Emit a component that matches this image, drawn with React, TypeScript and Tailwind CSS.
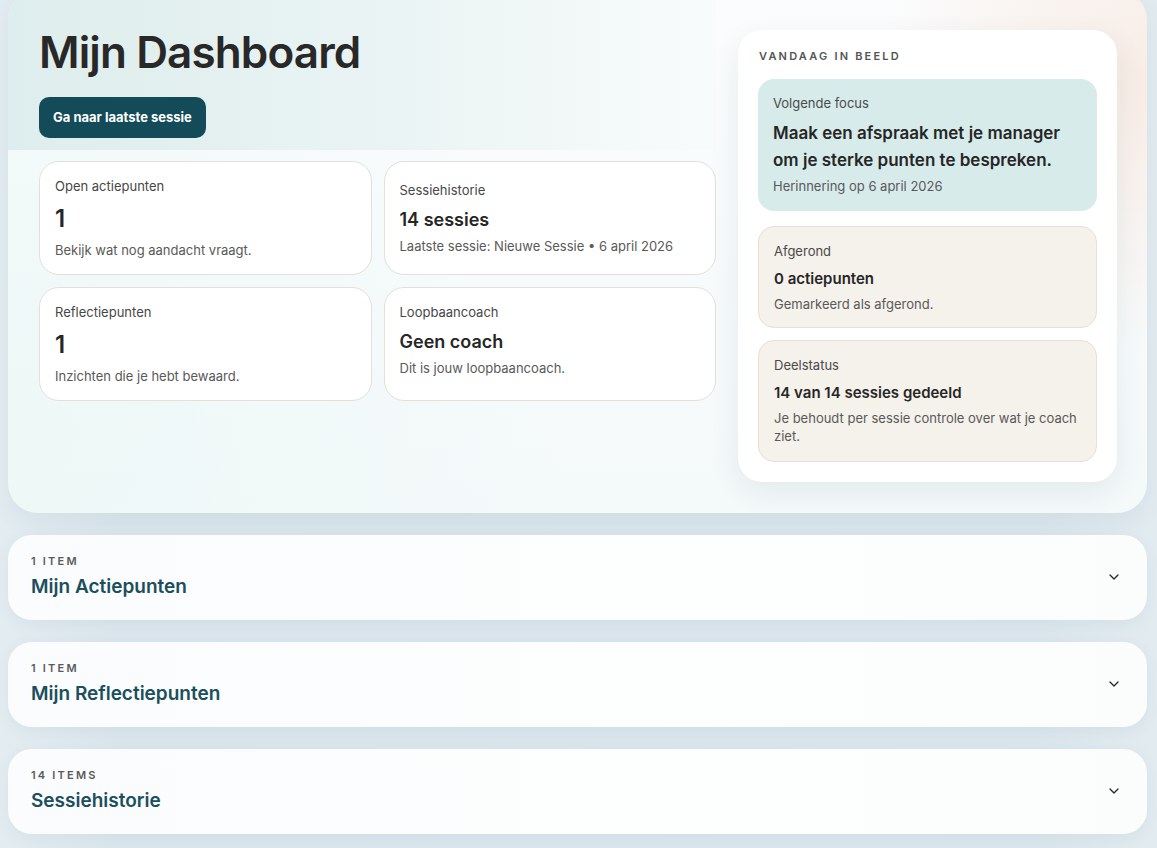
import { ChevronDown } from 'lucide-react'

// Stat tile in the hero grid
function StatCard({
  label,
  value,
  note,
  big,
  offset
}: {
  label: string
  value: string
  note: string
  big?: boolean
  offset?: boolean
}) {
  return (
    <div
      className={`flex flex-col rounded-[20px] border border-[#e4e0d9] bg-white px-[15px] pb-[14px] ${
        offset ? 'pt-[18px]' : 'pt-[14px]'
      }`}
    >
      <div className="text-[13px] leading-5 text-[#474747]">{label}</div>
      {big ? (
        <div className="mt-[7px] text-[24px] font-semibold leading-8 text-[#262626]">{value}</div>
      ) : (
        <div className="mt-[8px] text-[18px] font-semibold leading-6 text-[#262626]">{value}</div>
      )}
      <div className={`${big ? 'mt-[5px]' : 'mt-[4px]'} text-[13px] leading-5 text-[#595959]`}>{note}</div>
    </div>
  )
}

function SideCard({ label, value, note, className = '' }: { label: string; value: string; note: string; className?: string }) {
  return (
    <div className={`rounded-[16px] border border-[#e8e0d4] bg-[#f5f1eb] px-[15px] pt-[14px] ${className}`}>
      <div className="text-[13px] leading-5 text-[#4a4a4a]">{label}</div>
      <div className="mt-[7px] text-[15px] font-semibold leading-[22px] text-[#262626]">{value}</div>
      <div className="mt-[5px] text-[13px] leading-[18px] text-[#595959]">{note}</div>
    </div>
  )
}

function Section({ count, title }: { count: string; title: string }) {
  return (
    <div className="flex items-center rounded-[24px] bg-[linear-gradient(90deg,#fafcfd,#fdfefe_60%,#fbfdfd)] pl-[23px] pr-[25px] pt-[18px] pb-[20px] shadow-[0_4px_16px_rgba(40,80,100,0.05)]">
      <div className="flex-1">
        <div className="text-[11px] font-semibold uppercase leading-4 tracking-[0.2em] text-[#5a5a5a]">{count}</div>
        <div className="mt-[5px] text-[19px] font-semibold leading-[26px] text-[#1c4f5c]">{title}</div>
      </div>
      <ChevronDown size={16} strokeWidth={2} className="text-[#2a2a2a]" />
    </div>
  )
}

export default function App() {
  return (
    <div
      className="min-h-screen overflow-hidden bg-[linear-gradient(90deg,#e3ecf1,#dae6ec_10%,#dae6ec_90%,#e2ebf0)] pl-2 pr-[10px] pb-6"
      style={{ fontFamily: 'Inter, "Noto Sans", sans-serif' }}
    >
      {/* Hero */}
      <div className="-mt-[10px] grid grid-cols-[1fr_379px] gap-[22px] overflow-hidden rounded-[30px] bg-[radial-gradient(circle_at_100%_18%,#f8ece5_0,transparent_22%),radial-gradient(circle_at_0%_85%,#edf8f7_0,transparent_45%),linear-gradient(180deg,#fbfcfd,#f4f9fa)] pr-[30px] pb-[31px] shadow-[0_8px_24px_rgba(40,80,100,0.06)]">
        <div className="flex flex-col">
          <div className="bg-[linear-gradient(90deg,#deeded,#e9f3f3_50%,#f8fbfb)] pl-[31px] pt-[38px] pb-[12px]">
            <h1 className="text-[44px] font-semibold leading-[1.1] tracking-[-0.02em] text-[#282828]">Mijn Dashboard</h1>
            <button className="mt-[21px] inline-flex h-[41px] items-center rounded-[10px] bg-[#134b59] px-[14px] text-[13px] font-bold text-white">
              Ga naar laatste sessie
            </button>
          </div>
          <div className="grid grid-cols-2 gap-3 pl-[31px] pt-[11px]">
            <StatCard label="Open actiepunten" value="1" note="Bekijk wat nog aandacht vraagt." big />
            <StatCard label="Sessiehistorie" value="14 sessies" note="Laatste sessie: Nieuwe Sessie • 6 april 2026" offset />
            <StatCard label="Reflectiepunten" value="1" note="Inzichten die je hebt bewaard." big />
            <StatCard label="Loopbaancoach" value="Geen coach" note="Dit is jouw loopbaancoach." />
          </div>
        </div>

        {/* Vandaag in beeld */}
        <div className="mt-[40px] self-start rounded-[24px] bg-white px-[20px] pt-[18px] pb-[20px] shadow-[0_10px_30px_rgba(30,60,80,0.08)]">
          <div className="pl-px text-[11px] font-semibold uppercase leading-4 tracking-[0.2em] text-[#555]">Vandaag in beeld</div>
          <div className="mt-[15px] rounded-[16px] bg-[#d7ebeb] px-[15px] pt-[14px] pb-[15px]">
            <div className="text-[13px] leading-5 text-[#4a4a4a]">Volgende focus</div>
            <div className="mt-[7px] text-[17px] font-semibold leading-[27px] text-[#262626]">
              Maak een afspraak met je manager om je sterke punten te bespreken.
            </div>
            <div className="mt-[2px] text-[13px] leading-5 text-[#595959]">Herinnering op 6 april 2026</div>
          </div>
          <SideCard className="mt-[15px] pb-[14px]" label="Afgerond" value="0 actiepunten" note="Gemarkeerd als afgerond." />
          <SideCard
            className="mt-[12px] pb-[16px]"
            label="Deelstatus"
            value="14 van 14 sessies gedeeld"
            note="Je behoudt per sessie controle over wat je coach ziet."
          />
        </div>
      </div>

      <div className="mt-[22px] flex flex-col gap-[22px]">
        <Section count="1 item" title="Mijn Actiepunten" />
        <Section count="1 item" title="Mijn Reflectiepunten" />
        <Section count="14 items" title="Sessiehistorie" />
      </div>
    </div>
  )
}
